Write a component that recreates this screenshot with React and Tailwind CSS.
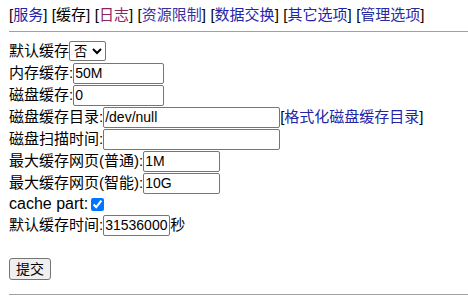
import React from 'react';

const font = { fontFamily: '"Liberation Sans", "Noto Sans CJK SC", sans-serif' };

const navs = [
  { t: '服务', c: 'text-[#2424a8]' },
  { t: '缓存', c: 'text-black' },
  { t: '日志', c: 'text-[#8a2463]' },
  { t: '资源限制', c: 'text-[#3d2fa0]' },
  { t: '数据交换', c: 'text-[#2424a8]' },
  { t: '其它选项', c: 'text-[#2424a8]' },
  { t: '管理选项', c: 'text-[#2a2aa0]' },
];

const inp = 'h-[21px] border border-[#767676] rounded-[2px] px-[1px] text-[14px] text-black bg-white outline-none';

function Row({ label, children, cls = 'text-[15px]' }) {
  return (
    <div className="flex items-center h-[22px]">
      <span className={cls}>{label}</span>
      {children}
    </div>
  );
}

export default function App() {
  return (
    <div className="bg-white text-black pt-[5px] pl-[9px] h-[308px] overflow-hidden" style={font}>
      <div className="flex gap-[4.5px] text-[15px] h-[20px] items-center">
        {navs.map(n => (
          <span key={n.t}>[<a className={n.c}>{n.t}</a>]</span>
        ))}
      </div>
      <div className="border-t border-[#a0a0a0] mt-[6px] mb-[8px]" />
      <form className="flex flex-col">
        <Row label="默认缓存">
          <select className="h-[20px] w-[37px] border border-[#767676] rounded-[2px] text-[13.33px] bg-white">
            <option>否</option>
          </select>
        </Row>
        <Row label="内存缓存:">
          <input className={`${inp} w-[91px]`} defaultValue="50M" />
        </Row>
        <Row label="磁盘缓存:">
          <input className={`${inp} w-[91px]`} defaultValue="0" />
        </Row>
        <Row label="磁盘缓存目录:">
          <input className={`${inp} w-[177px]`} defaultValue="/dev/null" />
          <span className="text-[15px]">[<a className="text-[#2424a8]">格式化磁盘缓存目录</a>]</span>
        </Row>
        <Row label="磁盘扫描时间:">
          <input className={`${inp} w-[177px]`} defaultValue="" />
        </Row>
        <Row label="最大缓存网页(普通):">
          <input className={`${inp} w-[77px]`} defaultValue="1M" />
        </Row>
        <Row label="最大缓存网页(智能):">
          <input className={`${inp} w-[77px]`} defaultValue="10G" />
        </Row>
        <div className="flex items-center h-[20px]">
          <span className="text-[16px]">cache part:</span>
          <input type="checkbox" defaultChecked className="ml-[3px] w-[13px] h-[13px] accent-[#0075ff]" />
        </div>
        <Row label="默认缓存时间:">
          <input className={`${inp} w-[67px]`} defaultValue="31536000" />
          <span className="text-[15px]">秒</span>
        </Row>
        <div className="h-[21px]" />
        <div>
          <button type="button" className="h-[22px] px-[6px] border border-[#767676] rounded-[3px] bg-[#efefef] text-[14px]">提交</button>
        </div>
      </form>
      <div className="border-t border-[#a0a0a0] mt-[13px]" />
    </div>
  );
}
